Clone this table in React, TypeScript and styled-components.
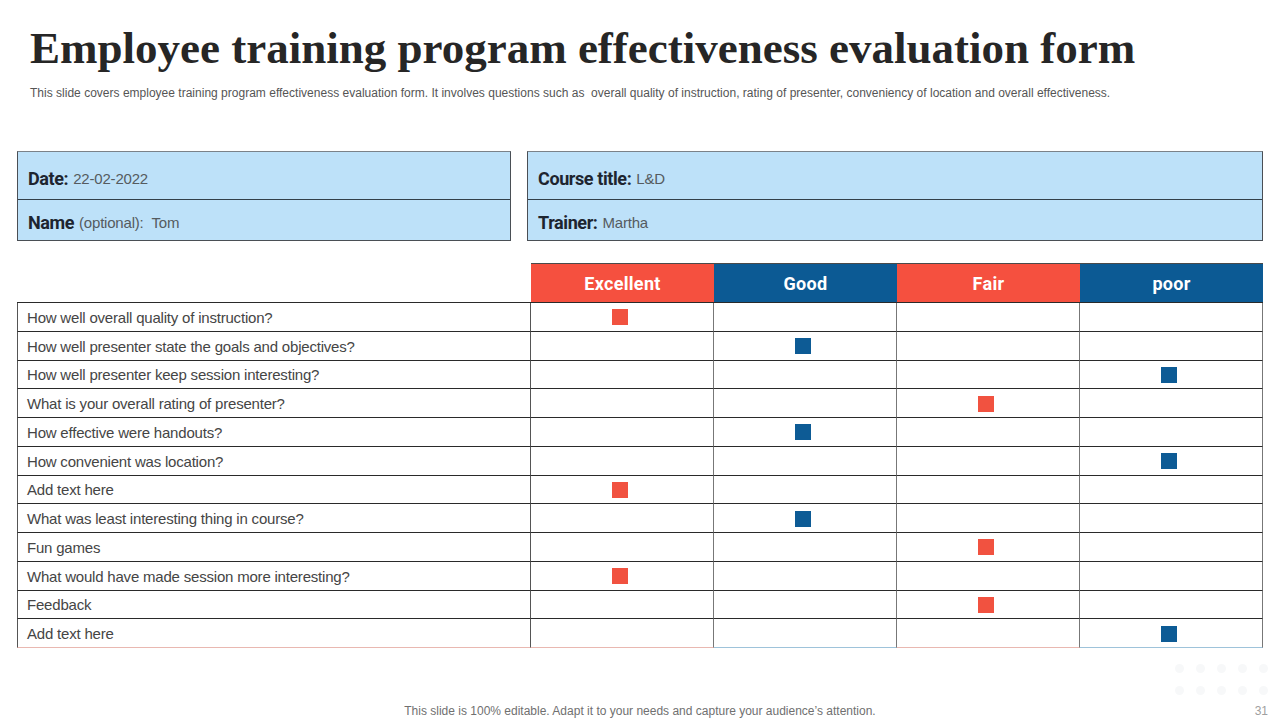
import React from "react";
import styled, { createGlobalStyle } from "styled-components";

const Global = createGlobalStyle`
  html, body { margin: 0; padding: 0; background: #ffffff; }
  * { box-sizing: border-box; }
`;

const Page = styled.div`
  position: relative;
  width: 1280px;
  height: 720px;
  overflow: hidden;
  display: flex;
  flex-direction: column;
  padding: 0 17px;
  background: #ffffff;
`;

const Title = styled.h1`
  margin: 26px 0 0 13px;
  font-family: "Liberation Serif", "DejaVu Serif", serif;
  font-weight: 700;
  font-size: 45px;
  line-height: 45px;
  color: #262626;
  white-space: nowrap;
`;

const Subtitle = styled.p`
  margin: 15px 0 0 13px;
  font-family: "Liberation Sans", Arial, sans-serif;
  font-size: 12px;
  line-height: 14px;
  color: #555555;
  letter-spacing: 0.01px;
  white-space: nowrap;
`;

const InfoGrid = styled.div`
  margin-top: 51px;
  display: grid;
  grid-template-columns: 494px 736px;
  column-gap: 16px;
`;

const InfoBox = styled.div`
  display: grid;
  grid-template-rows: 48px 40px;
  background: #bde1f9;
  border: 1px solid #4a4f55;
  border-top-color: #7b8289;
`;

const InfoRow = styled.div<{ $divider?: boolean }>`
  display: flex;
  align-items: center;
  padding: ${(p) => (p.$divider ? "5px 0 0 10px" : "5px 0 0 10px")};
  border-bottom: ${(p) => (p.$divider ? "1px solid #33404a" : "none")};
  white-space: nowrap;
`;

const Label = styled.span`
  font-family: Roboto, "Noto Sans", sans-serif;
  font-weight: 700;
  font-size: 18px;
  letter-spacing: -0.4px;
  color: #1d2530;
`;

const Value = styled.span`
  font-family: "Liberation Sans", Arial, sans-serif;
  font-size: 15px;
  letter-spacing: -0.2px;
  color: #555b60;
  margin-left: 5px;
`;

const Table = styled.div`
  margin-top: 22px;
  display: grid;
  grid-template-columns: 514px repeat(4, 183px);
  grid-template-rows: 40px repeat(12, 28.75px);
`;

const HeadBlank = styled.div`
  border-bottom: 1px solid #2a2a2a;
`;

const HeadCell = styled.div<{ $tone: "red" | "blue" }>`
  display: flex;
  align-items: center;
  justify-content: center;
  background: ${(p) => (p.$tone === "red" ? "#f5503f" : "#0c5a94")};
  color: #ffffff;
  font-family: Roboto, "Noto Sans", sans-serif;
  font-weight: 700;
  font-size: 18px;
  letter-spacing: 0.3px;
  border-bottom: 1px solid #2a2a2a;
  border-top: 1px solid #4a4a4a;
`;

const QCell = styled.div<{ $last?: boolean }>`
  display: flex;
  align-items: center;
  padding: 1px 0 0 9px;
  border-left: 1px solid #555;
  border-right: 1px solid #555;
  border-bottom: 1px solid ${(p) => (p.$last ? "#e9b8b1" : "#2a2a2a")};
  font-family: "Liberation Sans", Arial, sans-serif;
  font-size: 15px;
  letter-spacing: -0.2px;
  color: #454545;
  white-space: nowrap;
`;

const RCell = styled.div<{ $last?: boolean; $tone: "red" | "blue" }>`
  display: flex;
  align-items: center;
  justify-content: center;
  padding: 1px 4px 0 0;
  border-right: 1px solid #777;
  border-bottom: 1px solid
    ${(p) => (p.$last ? (p.$tone === "red" ? "#e9b8b1" : "#9ec3da") : "#2a2a2a")};
`;

const Mark = styled.span<{ $tone: "red" | "blue" }>`
  width: 16px;
  height: 16px;
  background: ${(p) => (p.$tone === "red" ? "#f15240" : "#0d5b95")};
`;

const Footer = styled.div`
  margin-top: auto;
  height: 18px;
  display: grid;
  grid-template-columns: 1fr auto 1fr;
  align-items: center;
  font-family: "Liberation Sans", Arial, sans-serif;
  font-size: 12px;
  color: #707070;
`;

const FootText = styled.span`
  grid-column: 2;
`;

const PageNum = styled.span`
  grid-column: 3;
  justify-self: end;
  margin-right: -5px;
  color: #a0a0a0;
`;

const Dots = styled.div`
  position: absolute;
  right: 12px;
  top: 664px;
  display: grid;
  grid-template-columns: repeat(5, 9px);
  gap: 13px 12px;
`;

const Dot = styled.span`
  width: 9px;
  height: 9px;
  border-radius: 50%;
  background: #f7f8f9;
`;

type Tone = "red" | "blue";
const cols: { name: string; tone: Tone }[] = [
  { name: "Excellent", tone: "red" },
  { name: "Good", tone: "blue" },
  { name: "Fair", tone: "red" },
  { name: "poor", tone: "blue" },
];

const rows: [string, number][] = [
  ["How well overall quality  of instruction?", 0],
  ["How well presenter state the goals and objectives?", 1],
  ["How well presenter keep session interesting?", 3],
  ["What is your overall  rating of presenter?", 2],
  ["How effective were handouts?", 1],
  ["How convenient was location?", 3],
  ["Add text here", 0],
  ["What was least interesting thing in course?", 1],
  ["Fun games", 2],
  ["What would have made session more interesting?", 0],
  ["Feedback", 2],
  ["Add text here", 3],
];

export default function App() {
  return (
    <>
      <Global />
      <Page>
        <Title>Employee training program effectiveness evaluation form</Title>
        <Subtitle>
          This slide covers employee training program effectiveness evaluation form. It involves questions such as &nbsp;overall quality of instruction, rating of presenter, conveniency of location and overall effectiveness.
        </Subtitle>
        <InfoGrid>
          <InfoBox>
            <InfoRow $divider>
              <Label>Date:</Label>
              <Value>22-02-2022</Value>
            </InfoRow>
            <InfoRow>
              <Label>Name</Label>
              <Value>(optional): &nbsp;Tom</Value>
            </InfoRow>
          </InfoBox>
          <InfoBox>
            <InfoRow $divider>
              <Label>Course title:</Label>
              <Value>L&amp;D</Value>
            </InfoRow>
            <InfoRow>
              <Label>Trainer:</Label>
              <Value>Martha</Value>
            </InfoRow>
          </InfoBox>
        </InfoGrid>
        <Table>
          <HeadBlank />
          {cols.map((c) => (
            <HeadCell key={c.name} $tone={c.tone}>
              {c.name}
            </HeadCell>
          ))}
          {rows.map(([q, sel], i) => {
            const last = i === rows.length - 1;
            return (
              <React.Fragment key={i}>
                <QCell $last={last}>{q}</QCell>
                {cols.map((c, j) => (
                  <RCell key={c.name} $last={last} $tone={c.tone}>
                    {sel === j && <Mark $tone={c.tone} />}
                  </RCell>
                ))}
              </React.Fragment>
            );
          })}
        </Table>
        <Footer>
          <FootText>
            This slide is 100% editable. Adapt it to your needs and capture your audience’s attention.
          </FootText>
          <PageNum>31</PageNum>
        </Footer>
        <Dots>
          {Array.from({ length: 10 }).map((_, i) => (
            <Dot key={i} />
          ))}
        </Dots>
      </Page>
    </>
  );
}
